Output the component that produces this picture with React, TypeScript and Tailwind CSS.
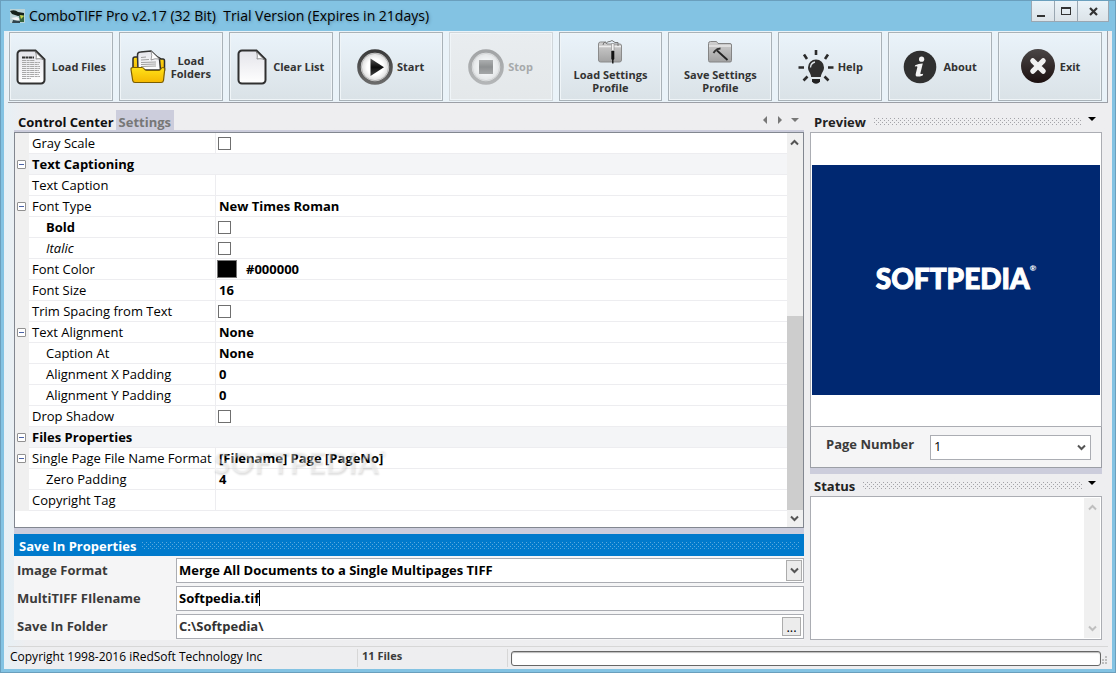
import React, { useState } from "react";

type Row = {
  name: string;
  kind: "text" | "check" | "color" | "group";
  value?: string;
  indent?: boolean;
  toggle?: boolean;
  look?: string;
};

const rows: Row[] = [
  { name: "Gray Scale", kind: "check" },
  { name: "Text Captioning", kind: "group", toggle: true },
  { name: "Text Caption", kind: "text" },
  { name: "Font Type", kind: "text", value: "New Times Roman", toggle: true },
  { name: "Bold", kind: "check", indent: true, look: "font-bold" },
  { name: "Italic", kind: "check", indent: true, look: "italic" },
  { name: "Font Color", kind: "color", value: "#000000" },
  { name: "Font Size", kind: "text", value: "16" },
  { name: "Trim Spacing from Text", kind: "check" },
  { name: "Text Alignment", kind: "text", value: "None", toggle: true },
  { name: "Caption At", kind: "text", value: "None", indent: true },
  { name: "Alignment X Padding", kind: "text", value: "0", indent: true },
  { name: "Alignment Y Padding", kind: "text", value: "0", indent: true },
  { name: "Drop Shadow", kind: "check" },
  { name: "Files Properties", kind: "group", toggle: true },
  { name: "Single Page File Name Format", kind: "text", value: "[Filename] Page [PageNo]", toggle: true },
  { name: "Zero Padding", kind: "text", value: "4", indent: true },
  { name: "Copyright Tag", kind: "text" },
];

function Defs() {
  return (
    <svg className="absolute size-0" aria-hidden="true">
      <defs>
        <linearGradient id="paper" x1="0" y1="0" x2="0" y2="1">
          <stop offset="0" stopColor="#e4e4ea" />
          <stop offset="1" stopColor="#ffffff" />
        </linearGradient>
        <linearGradient id="gold" x1="0" y1="0" x2="0" y2="1">
          <stop offset="0" stopColor="#ffe21a" />
          <stop offset="1" stopColor="#f5b800" />
        </linearGradient>
        <linearGradient id="ring" x1="0" y1="0" x2="0" y2="1">
          <stop offset="0" stopColor="#3c3c3c" />
          <stop offset="1" stopColor="#6a6a6a" />
        </linearGradient>
        <radialGradient id="face">
          <stop offset="0.5" stopColor="#ffffff" />
          <stop offset="1" stopColor="#cfcfcf" />
        </radialGradient>
        <linearGradient id="tri" x1="0" y1="0" x2="0" y2="1">
          <stop offset="0" stopColor="#555" />
          <stop offset="0.5" stopColor="#0c0c0c" />
          <stop offset="1" stopColor="#444" />
        </linearGradient>
        <linearGradient id="steel" x1="0" y1="0" x2="0" y2="1">
          <stop offset="0" stopColor="#d0d0d0" />
          <stop offset="1" stopColor="#a2a2a2" />
        </linearGradient>
        <linearGradient id="coal" x1="0" y1="0" x2="0" y2="1">
          <stop offset="0" stopColor="#4a4646" />
          <stop offset="1" stopColor="#1c1010" />
        </linearGradient>
      </defs>
    </svg>
  );
}

function PageIcon({ lines }: { lines?: boolean }) {
  return (
    <svg width="30" height="36" viewBox="0 0 30 36" aria-hidden="true" className="shrink-0">
      <path d="M5 1.500H19.500L28.500 10.500V31a3.500 3.500 0 0 1-3.500 3.500H5A3.500 3.500 0 0 1 1.500 31V5A3.500 3.500 0 0 1 5 1.500Z" fill="url(#paper)" stroke="#303030" strokeWidth="2" />
      <path d="M19 2.500c1.500 2 1.500 5 1 7.500 3-.6 5.500-.4 7.500 1z" fill="#fff" stroke="#777" strokeWidth="0.800" />
      {lines && (
        <g fill="none">
          <path d="M6 8.500h12" stroke="#333" strokeWidth="2" strokeDasharray="3 0.500" />
          <path d="M6 11.500h13M6 13.500h18M6 15.500h17M6 17.500h18M6 19.500h18M6 21.500h17M6 23.500h18M6 25.500h17M6 27.500h18M6 29.500h9" stroke="#a8a8a8" strokeWidth="1" strokeDasharray="4 0.600 3 0.500" />
        </g>
      )}
    </svg>
  );
}

function FolderIcon() {
  return (
    <svg width="36" height="34" viewBox="0 0 36 34" aria-hidden="true" className="shrink-0">
      <path d="M3 19V9q0-2 2-2h3V4h14l9 5h2q1.500 0 1.500 2v9z" fill="url(#gold)" stroke="#2b2b2b" strokeWidth="1.500" />
      <path d="M8 20 7.500 5Q7.500 2 10.500 2L21 1 29.500 9 30.500 20z" fill="url(#paper)" stroke="#333" strokeWidth="1.500" />
      <path d="M21 1q1.500 4 0 9 4-2 8.500-1z" fill="#fff" stroke="#777" strokeWidth="0.700" />
      <path d="M11 7.500l5-.5M11 10l8-.5M11 12.500l15-.5M11 14.500l15-.5M11 16.500l15-.5" stroke="#a0a0a0" strokeWidth="1" />
      <path d="M1 19.500q-.2-2 1.800-2h9q1.500 0 2.500 1.500t2.500 1.500h12q1.200 0 2-1.500t2.200-1.500q2 0 1.700 2l-1.200 11q-.3 2-2.300 2H5q-2 0-2.300-2z" fill="url(#gold)" stroke="#7b5d00" strokeWidth="1.200" />
    </svg>
  );
}

function RoundIcon({ stop }: { stop?: boolean }) {
  return (
    <svg width="36" height="36" viewBox="0 0 36 36" aria-hidden="true" className="shrink-0">
      <circle cx="18" cy="18" r="16" fill="url(#face)" stroke="url(#ring)" strokeWidth="3.600" />
      <circle cx="18" cy="18" r="13.600" fill="none" stroke="#b5b5b5" strokeWidth="1" />
      {stop ? <rect x="11" y="11" width="14" height="14" fill="url(#tri)" /> : <path d="M13.500 9.500V27L27 18.200z" fill="url(#tri)" />}
    </svg>
  );
}

function LoadProfileIcon() {
  return (
    <svg width="26" height="24" viewBox="0 0 26 24" aria-hidden="true">
      <path d="M1.500 4q0-2 2-2h5l1.500 2h13q1.500 0 1.500 2v14q0 2-2 2h-19q-2 0-2-2z" fill="url(#steel)" stroke="#8b8b8b" />
      <path d="M2 6.500h22" stroke="#ececec" strokeWidth="1.500" />
      <path d="M9 4q1-3 4-2.500l2-1 3 2 3 0v3.500M6 5q0-3 3-3" fill="none" stroke="#777" strokeWidth="1" />
      <path d="M14.500 3.500h2.500v7h-2.500z" fill="#f2f2f2" stroke="#888" strokeWidth="0.600" />
      <path d="M14.300 11h3v8l-.8 1v3.500h-1.400V20l-.8-1z" fill="#111" />
    </svg>
  );
}

function SaveProfileIcon() {
  return (
    <svg width="26" height="24" viewBox="0 0 26 24" aria-hidden="true">
      <path d="M1.500 3.500q0-2 2-2h6l1.500 2h12q1.500 0 1.500 1.500v15.500q0 1.500-1.500 1.500H3q-1.500 0-1.500-1.500z" fill="url(#steel)" stroke="#848484" />
      <path d="M2 6h22" stroke="#f0f0f0" strokeWidth="1.200" />
      <path d="M10 10.500 20.500 20" stroke="#222" strokeWidth="1.800" />
      <path d="M6.500 13 8 11q2-2.500 5.500-2.500" fill="none" stroke="#333" strokeWidth="2" />
    </svg>
  );
}

function BulbIcon() {
  return (
    <svg width="36" height="36" viewBox="0 0 36 36" aria-hidden="true" className="shrink-0">
      <path d="M18 1v5M6 5.500l3 4.500M30 5.500 27 10M.5 18.500H6M30 18.500h5.500M5.500 31.500l4-4M30.500 31.500l-4-4" stroke="#2b2b2b" strokeWidth="2.600" />
      <path d="M18 10.500a8 8 0 0 1 8 8c0 4-2.600 5-3.200 9.500h-9.600C12.600 23.500 10 22.500 10 18.500a8 8 0 0 1 8-8Z" fill="#2f2f2f" />
      <path d="M12.500 18.500q.3-4.500 4.500-5.500" fill="none" stroke="#dfe5ea" strokeWidth="1.300" />
      <path d="M14 30h8v2.500q-1 1-1.500 1.500-2.500 1.500-5 0L14 32.500z" fill="#222" />
    </svg>
  );
}

function InfoIcon() {
  return (
    <svg width="34" height="34" viewBox="0 0 34 34" aria-hidden="true" className="shrink-0">
      <circle cx="17" cy="17" r="16.300" fill="#303030" />
      <circle cx="18.600" cy="9.200" r="2.600" fill="#f2f2f2" />
      <path d="M12.200 15.200q3.500-1.800 7.600-1.700l-2.400 9.700q-.3 1.500 2.800.5l-.5 1.700q-7.800 3-7-1.500l1.700-7q.2-1-2.600-.5z" fill="#f2f2f2" />
    </svg>
  );
}

function ExitIcon() {
  return (
    <svg width="36" height="36" viewBox="0 0 36 36" aria-hidden="true" className="shrink-0">
      <circle cx="18" cy="17" r="17" fill="url(#coal)" />
      <path d="M12.800 11.800 23.200 22.200M23.200 11.800 12.800 22.200" stroke="#f1f1f1" strokeWidth="5.200" strokeLinecap="round" />
    </svg>
  );
}

type Tool = { label: string; icon: React.ReactNode; layout: string; disabled?: boolean };

const tools: Tool[] = [
  { label: "Load Files", icon: <PageIcon lines />, layout: "flex-row gap-1.5" },
  { label: "Load Folders", icon: <FolderIcon />, layout: "flex-row gap-1 px-2.5" },
  { label: "Clear List", icon: <PageIcon />, layout: "flex-row gap-1.5" },
  { label: "Start", icon: <RoundIcon />, layout: "flex-row gap-1" },
  { label: "Stop", icon: <RoundIcon stop />, layout: "flex-row gap-1", disabled: true },
  { label: "Load Settings Profile", icon: <LoadProfileIcon />, layout: "flex-col gap-1 px-1" },
  { label: "Save Settings Profile", icon: <SaveProfileIcon />, layout: "flex-col gap-1 px-1" },
  { label: "Help", icon: <BulbIcon />, layout: "flex-row gap-1" },
  { label: "About", icon: <InfoIcon />, layout: "flex-row gap-1.5" },
  { label: "Exit", icon: <ExitIcon />, layout: "flex-row gap-1" },
];

function Grip({ id, color }: { id: string; color: string }) {
  return (
    <svg className="h-[7px] w-0 min-w-0 flex-1" shapeRendering="crispEdges" aria-hidden="true">
      <defs>
        <pattern id={id} width="4" height="4" patternUnits="userSpaceOnUse">
          <rect width="1" height="1" fill={color} />
          <rect x="2" y="2" width="1" height="1" fill={color} />
        </pattern>
      </defs>
      <rect width="100%" height="100%" fill={`url(#${id})`} />
    </svg>
  );
}

function Chevron({ up, color = "#555" }: { up?: boolean; color?: string }) {
  return (
    <svg width="9" height="7" viewBox="0 0 9 7" aria-hidden="true">
      <path d={up ? "M1 5.500 4.500 2 8 5.500" : "M1 1.500 4.500 5 8 1.500"} fill="none" stroke={color} strokeWidth="2" />
    </svg>
  );
}

function Arrow({ d, color }: { d: string; color: string }) {
  return (
    <svg width="8" height="8" viewBox="0 0 8 8" aria-hidden="true">
      <path d={d} fill={color} />
    </svg>
  );
}

function PanelHeader({ title }: { title: string }) {
  return (
    <div className="flex h-[22px] items-center pr-1.5 pl-1">
      <h2 className="pt-0.5 font-bold text-[#222]">{title}</h2>
      <div className="flex min-w-0 flex-1 items-center gap-1.5 pl-2">
        <Grip id={"grip" + title} color="#a3a3a8" />
        <button aria-label={`${title} menu`} className="mb-1">
          <Arrow d="M0 2h8L4 6z" color="#000" />
        </button>
      </div>
    </div>
  );
}

function PropertyRow({ row }: { row: Row }) {
  const [on, setOn] = useState(false);
  const [open, setOpen] = useState(true);
  const id = row.name.replace(/ /g, "-");
  const group = row.kind === "group";
  return (
    <tr className="h-[21px]">
      <td className="bg-[#f0f0f0] p-0 pl-0.5">
        {row.toggle && (
          <button
            aria-label={`Collapse ${row.name}`}
            aria-expanded={open}
            onClick={() => setOpen(!open)}
            className="flex size-[9px] items-center justify-center rounded-[1px] border border-[#919191] bg-white"
          >
            <span className="h-px w-[5px] bg-[#4b63a7]" />
          </button>
        )}
      </td>
      <th
        scope="row"
        colSpan={group ? 2 : 1}
        className={`border-b border-[#ededf0] p-0 text-left whitespace-nowrap ${row.indent ? "pl-[17px]" : "pl-[3px]"} ${
          group ? "bg-[#f4f5f7] font-bold" : row.look ?? "font-normal"
        } ${row.look === "italic" ? "font-normal" : ""}`}
      >
        {row.kind === "check" ? <label htmlFor={id}>{row.name}</label> : row.name}
      </th>
      {!group && (
        <td
          className={`border-b border-l border-[#ededf0] p-0 font-bold ${row.kind === "text" ? "pl-[3px]" : row.kind === "check" ? "pl-0.5" : "pl-px"}`}
        >
          {row.kind === "check" && (
            <input
              id={id}
              type="checkbox"
              checked={on}
              onChange={() => setOn(!on)}
              className="block size-[13px] appearance-none border border-[#6f6f6f] bg-white checked:bg-[#555]"
            />
          )}
          {row.kind === "color" && (
            <span className="flex items-center gap-[9px]">
              <span className="h-[18px] w-5 border border-[#777] bg-black" />
              {row.value}
            </span>
          )}
          {row.kind === "text" && row.value}
        </td>
      )}
    </tr>
  );
}

export default function App() {
  const [format, setFormat] = useState("Merge All Documents to a Single Multipages TIFF");
  const [file, setFile] = useState("Softpedia.tif");
  const [folder, setFolder] = useState("C:\\Softpedia\\");

  return (
    <div className="flex min-h-screen flex-col border border-[#6a9fbd] bg-[#83c3e3] px-[3px] pb-[3px] font-['Open_Sans','Noto_Sans',sans-serif] text-[13px] leading-4 text-black">
      <Defs />
      <header className="flex h-[30px] items-start justify-between pr-[3px] pl-1.5">
        <div className="flex h-full items-center gap-1">
          <svg width="15" height="14" viewBox="0 0 15 14" aria-hidden="true">
            <rect width="15" height="14" fill="#b9d3d8" />
            <path d="M0 2q5-2 8 1l6 1v2L8 7 2 5z" fill="#16221b" />
            <path d="M1 9l6-1 3 2-3 2z" fill="#f4f4f4" />
            <path d="M9 7l5-1v7h-4z" fill="#35643d" />
            <path d="M10 6l4 1-3 3z" fill="#c9d24a" />
            <path d="M3 11l7 1v2H2z" fill="#32454e" />
          </svg>
          <h1 className="text-[14px] whitespace-pre [text-shadow:1px_1px_3px_#5b8ba6]">
            {"ComboTIFF Pro v2.17 (32 Bit)  Trial Version (Expires in 21days)"}
          </h1>
        </div>
        <div className="flex h-[21px] divide-x divide-[#9aa7b2] border border-t-0 border-[#9aa7b2] bg-linear-to-b from-[#eaf3f9] to-[#dce3e8]">
          <button aria-label="Minimize" className="flex w-[23px] items-end justify-center pr-1 pb-1">
            <span className="h-0.5 w-2 bg-[#333]" />
          </button>
          <button aria-label="Maximize" className="flex w-[23px] items-center justify-center">
            <span className="h-2 w-2.5 border border-t-2 border-[#333]" />
          </button>
          <button aria-label="Close" className="flex w-[30px] items-center justify-center">
            <svg width="9" height="9" viewBox="0 0 9 9" aria-hidden="true">
              <path d="M1 1l7 7M8 1 1 8" stroke="#333" strokeWidth="2.200" />
            </svg>
          </button>
        </div>
      </header>

      <div className="flex flex-1 flex-col bg-linear-to-r from-[#e6f0f6] via-[#eeeef0] via-2% to-[#eeeef0] pr-1 pl-1">
        <nav className="grid grid-cols-10 gap-1.5 border-r border-b border-[#9c9fa6] bg-[#eaf3f9] py-px pr-[5px] pl-px">
          {tools.map((t) => (
            <button
              key={t.label}
              disabled={t.disabled}
              className={`flex h-[69px] min-w-0 items-center justify-center border border-[#a9b2b8] bg-linear-to-b from-[#eaf3fa] to-[#dae2e7] text-[11px] leading-[13px] font-bold text-[#333] shadow-[inset_0_0_0_1px_#f0f5f8] disabled:border-[#d0d6da] disabled:from-[#e9edf0] disabled:to-[#e4e8ea] disabled:text-[#a6a9ab] disabled:[&>svg]:opacity-40 ${t.layout}`}
            >
              {t.icon}
              <span>{t.label}</span>
            </button>
          ))}
        </nav>

        <main className="flex flex-1 gap-1.5 px-1.5 pt-[7px] pb-1.5">
          <section className="flex min-w-0 flex-1 flex-col">
            <div className="flex h-5 items-stretch justify-between">
              <div role="tablist" className="flex font-bold">
                <button role="tab" aria-selected="true" className="pt-1 pr-0.5 pl-1 text-[#111]">
                  Control Center
                </button>
                <button role="tab" aria-selected="false" className="bg-[#cccddc] px-[3px] pt-1 text-[#777]">
                  Settings
                </button>
              </div>
              <div className="flex items-center gap-[7px] pr-[5px]">
                <button aria-label="Previous tab"><Arrow d="M6 0v8L2 4z" color="#777" /></button>
                <button aria-label="Next tab"><Arrow d="M2 0v8l4-4z" color="#777" /></button>
                <button aria-label="Tab list"><Arrow d="M0 2h8L4 6z" color="#777" /></button>
              </div>
            </div>

            <div className="flex flex-1 flex-col border-y-[2px] border-b-[6px] border-[#cccddc]">
              <div className="relative flex flex-1 border border-[#828790] bg-white">
                <div className="min-w-0 flex-1">
                  <table className="w-full table-fixed border-separate border-spacing-0">
                    <colgroup>
                      <col className="w-[14px]" />
                      <col className="w-[186px]" />
                      <col />
                    </colgroup>
                    <tbody>
                      {rows.map((r) => (
                        <PropertyRow key={r.name} row={r} />
                      ))}
                    </tbody>
                  </table>
                </div>
                <div className="flex w-4 flex-col bg-[#f0f0f0] pr-px">
                  <button aria-label="Scroll up" className="flex h-[18px] items-center justify-center"><Chevron up /></button>
                  <div className="-mr-px flex flex-1 flex-col justify-end">
                    <div className="h-[54%] bg-[#cdcdcd]" />
                  </div>
                  <button aria-label="Scroll down" className="flex h-[17px] items-center justify-center"><Chevron /></button>
                </div>
                <span className="pointer-events-none absolute bottom-[54px] left-[198px] flex items-start font-['Lato'] text-[30px] leading-6 font-black text-white/40 [text-shadow:1px_2px_2px_rgba(0,0,0,0.12)]">
                  SOFTPEDIA<span className="text-[9px] leading-2">®</span>
                </span>
              </div>
            </div>

            <div className="flex h-[22px] items-center gap-1.5 bg-[#007acc] px-[5px]">
              <h2 className="pt-0.5 font-bold text-white">Save In Properties</h2>
              <Grip id="gripSave" color="#5aa9de" />
            </div>
            <form className="grid grid-cols-[159px_1fr] items-center gap-y-[3px] bg-[#f5f5f6] pt-0.5 pb-px pl-[3px] font-bold text-[#3b3b3b]">
              <label htmlFor="format" className="pb-0.5">Image Format</label>
              <div className="relative flex h-[25px] items-center border border-[#abadb3] bg-white">
                <select id="format" value={format} onChange={(e) => setFormat(e.target.value)} className="h-full w-full appearance-none px-0.5 pb-0.5 text-black">
                  <option>Merge All Documents to a Single Multipages TIFF</option>
                </select>
                <span className="pointer-events-none absolute top-px right-px bottom-px flex w-4 items-center justify-center border border-[#acacac] bg-[#ececec]">
                  <Chevron />
                </span>
              </div>
              <label htmlFor="filename" className="pb-0.5">MultiTIFF FIlename</label>
              <div className="flex h-[25px] items-center border border-[#abadb3] bg-white pb-0.5">
                <input id="filename" size={1} value={file} onChange={(e) => setFile(e.target.value)} className="field-sizing-content max-w-full border-r border-black pl-0.5 text-black outline-none" />
              </div>
              <label htmlFor="folder" className="pb-0.5">Save In Folder</label>
              <div className="flex h-[25px] items-center border border-[#abadb3] bg-white pr-0.5">
                <input id="folder" value={folder} onChange={(e) => setFolder(e.target.value)} className="min-w-0 flex-1 px-0.5 pb-0.5 text-[#333] outline-none" />
                <button type="button" aria-label="Browse" className="flex h-[19px] w-[19px] items-center justify-center border border-[#acacac] bg-[#ececec] font-normal text-black">
                  ...
                </button>
              </div>
            </form>
          </section>

          <aside className="flex w-[292px] shrink-0 flex-col">
            <PanelHeader title="Preview" />
            <div className="flex flex-1 flex-col justify-center border border-[#abadb3] bg-white p-px">
              <div className="flex h-[230px] items-center justify-center bg-[#002871] pb-1">
                <span className="flex items-start font-['Lato'] text-[28px] leading-8 font-black text-white [-webkit-text-stroke:1px_white]">
                  SOFTPEDIA
                  <span className="text-[8px] leading-3 [-webkit-text-stroke:0px]">®</span>
                </span>
              </div>
            </div>
            <div className="flex h-[41px] items-center border border-t-0 border-[#9c9fa6] bg-[#f5f5f6] pr-2.5 pl-[15px]">
              <label htmlFor="page" className="w-[104px] pb-1.5 font-bold text-[#3b3b3b]">Page Number</label>
              <div className="relative flex h-[25px] flex-1 border border-[#abadb3] bg-white">
                <select id="page" className="w-full appearance-none px-[3px] pb-0.5">
                  <option>1</option>
                </select>
                <span className="pointer-events-none absolute inset-y-0 right-1 flex items-center"><Chevron /></span>
              </div>
            </div>
            <div className="h-1.5 bg-[#cccddc]" />
            <PanelHeader title="Status" />
            <div className="flex h-36 border border-[#abadb3] bg-white p-px">
              <textarea aria-label="Status" readOnly className="min-w-0 flex-1 resize-none outline-none" />
              <div className="flex w-4 flex-col items-center justify-between bg-[#f0f0f0] py-1.5">
                <Chevron up color="#bfbfbf" />
                <Chevron color="#bfbfbf" />
              </div>
            </div>
          </aside>
        </main>

        <footer className="flex h-[23px] items-center border-t border-[#d7d7d7] text-xs">
          <p className="w-[349px] pb-0.5 pl-0.5">Copyright 1998-2016 iRedSoft Technology Inc</p>
          <p className="h-[18px] w-[150px] border-l border-[#d7d7d7] pl-1 text-[11px] font-bold text-[#3b3b3b]">11 Files</p>
          <div className="flex h-[18px] flex-1 items-center border-l border-[#d7d7d7] pl-[3px]">
            <div role="progressbar" aria-label="Progress" aria-valuenow={0} className="h-[15px] flex-1 rounded-[3px] border border-[#666] bg-white shadow-[inset_0_1px_1px_#bbb]" />
          </div>
          <svg width="7" height="9" viewBox="0 0 7 9" aria-hidden="true" className="mb-1 self-end">
            <path d="M4 0h2v2H4zM4 3h2v2H4zM1 3h2v2H1zM4 6h2v2H4zM1 6h2v2H1z" fill="#bdbdbd" />
          </svg>
        </footer>
      </div>
    </div>
  );
}
